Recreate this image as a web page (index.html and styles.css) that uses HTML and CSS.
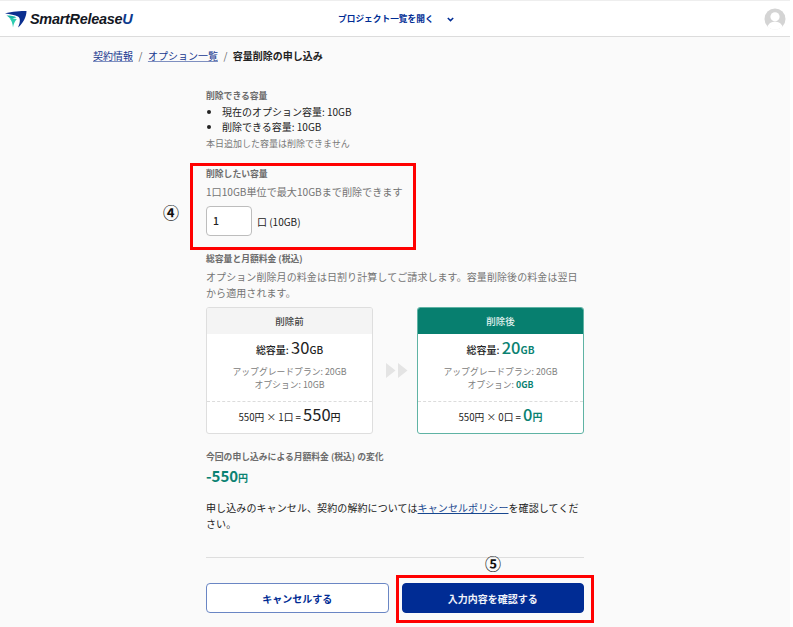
FILE: index.html
```html
<!DOCTYPE html>
<html lang="ja">
<head>
<meta charset="utf-8">
<title>容量削除の申し込み</title>
<link rel="stylesheet" href="styles.css">
</head>
<body>
<div class="page">
  <header class="header">
    <div class="logo">
      <svg class="logo-mark" width="22" height="17" viewBox="0 0 22 17">
        <path d="M0 2.500C7 .5 16 0 21.500 0C21.500 6 18 12.500 13 16.500C15.500 11 15.500 7 13 5.500C10 4 5 3.300 0 2.500Z" fill="#0b2f8f"/>
        <path d="M1.500 4.500C5.500 4.500 9.500 5 11.500 6.500C9 6.500 7.500 7.500 6.800 9C5.500 7.500 3.500 5.700 1.500 4.500Z" fill="#19b5a5"/>
        <path d="M4.500 7.500C6.500 9.500 7.600 12 8 16.500C8.600 13 9.500 10.500 11.800 8C9.500 7.500 7 7.500 4.500 7.500Z" fill="#2dcdb0"/>
      </svg>
      <span class="logo-text">SmartRelease<span class="logo-u">U</span></span>
    </div>
    <div class="project-menu">
      <span>プロジェクト一覧を開く</span>
      <svg class="chevron" width="7" height="5" viewBox="0 0 7 5"><path d="M.8 1l2.700 2.600L6.200 1" fill="none" stroke="#002c94" stroke-width="1.500"/></svg>
    </div>
    <svg class="avatar" width="22" height="22" viewBox="0 0 22 22">
      <circle cx="11" cy="11" r="10.500" fill="#d4d4d4"/>
      <circle cx="11" cy="8.800" r="4.600" fill="#fff"/>
      <path d="M3.500 18.500C5 14.800 8 13.800 11 13.800s6 1 7.500 4.700A10.500 10.500 0 0 1 3.500 18.500Z" fill="#fff"/>
    </svg>
  </header>

  <nav class="breadcrumb">
    <a href="#">契約情報</a><span class="sep">/</span><a href="#">オプション一覧</a><span class="sep">/</span><strong>容量削除の申し込み</strong>
  </nav>

  <main class="content">
    <section class="block-available">
      <h2 class="label">削除できる容量</h2>
      <ul class="list">
        <li>現在のオプション容量: 10GB</li>
        <li>削除できる容量: 10GB</li>
      </ul>
      <p class="note">本日追加した容量は削除できません</p>
    </section>

    <section class="block-input">
      <h2 class="label">削除したい容量</h2>
      <p class="hint">1口10GB単位で最大10GBまで削除できます</p>
      <div class="input-row">
        <div class="number-box">1</div>
        <span class="unit">口 (10GB)</span>
      </div>
    </section>

    <section class="block-total">
      <h2 class="label">総容量と月額料金 (税込)</h2>
      <p class="hint wrap">オプション削除月の料金は日割り計算してご請求します。容量削除後の料金は翌日から適用されます。</p>
      <div class="compare">
        <div class="card">
          <div class="card-head">削除前</div>
          <div class="card-main">
            <div class="total">総容量: <span class="num">30</span><span class="suffix">GB</span></div>
            <div class="detail">アップグレードプラン: 20GB<br>オプション: 10GB</div>
          </div>
          <div class="card-foot">550円 × 1口 = <span class="num">550</span><span class="suffix">円</span></div>
        </div>
        <svg class="arrows" width="22" height="15" viewBox="0 0 22 15">
          <path d="M0 0l9.500 7.500L0 15ZM12 0l9.500 7.500L12 15Z" fill="#e4e4e4"/>
        </svg>
        <div class="card card-after">
          <div class="card-head">削除後</div>
          <div class="card-main">
            <div class="total">総容量: <span class="num green">20</span><span class="suffix green">GB</span></div>
            <div class="detail">アップグレードプラン: 20GB<br>オプション: <b class="green">0GB</b></div>
          </div>
          <div class="card-foot">550円 × 0口 = <span class="num green">0</span><span class="suffix green">円</span></div>
        </div>
      </div>
    </section>

    <section class="block-change">
      <h2 class="label">今回の申し込みによる月額料金 (税込) の変化</h2>
      <div class="change"><b class="change-num">-550</b><b class="change-unit">円</b></div>
    </section>

    <p class="policy">申し込みのキャンセル、契約の解約については<a href="#">キャンセルポリシー</a>を確認してください。</p>

    <hr class="rule">

    <div class="actions">
      <button class="btn btn-outline" type="button">キャンセルする</button>
      <button class="btn btn-primary" type="button">入力内容を確認する</button>
    </div>
  </main>

  <div class="mark-box mark-box-input"></div>
  <div class="mark-box mark-box-submit"></div>
  <span class="marker marker-4">④</span>
  <span class="marker marker-5">⑤</span>
</div>
</body>
</html>
```
FILE: styles.css
```css
* { box-sizing: border-box; }
html, body { margin: 0; padding: 0; background: #fff; }
body {
  font-family: "Noto Sans CJK JP", "Noto Sans", sans-serif;
  color: #1f1f1f;
  overflow: hidden;
}
.page {
  position: relative;
  width: 790px;
  height: 627px;
  background: #fafafa;
  overflow: hidden;
}
.header {
  position: relative;
  display: flex;
  align-items: center;
  height: 37px;
  padding: 1px 4px 0 5px;
  background: #fff;
  border-top: 1px solid #eee;
  border-bottom: 1px solid #dcdcdc;
}
.logo { display: flex; align-items: center; width: 130px; }
.logo-mark { margin-right: 3px; flex: none; }
.logo-text {
  font-family: "Liberation Sans", sans-serif;
  font-size: 14.500px;
  font-weight: 700;
  font-style: italic;
  letter-spacing: -0.300px;
  color: #14171f;
}
.logo-u { color: #0b3a8f; }
.project-menu {
  position: absolute;
  left: 338px;
  top: 11px;
  display: flex;
  align-items: center;
  gap: 13px;
  font-size: 8.700px;
  line-height: 14px;
  font-weight: 700;
  color: #002c94;
}
.avatar { margin-left: auto; }
.breadcrumb {
  display: flex;
  align-items: center;
  height: 16px;
  margin: 11px 0 0 93px;
  font-size: 10px;
  line-height: 16px;
}
.breadcrumb a { color: #17388f; text-decoration: underline; text-decoration-color: #7e8fc0; }
.breadcrumb .sep { margin: 0 5.500px; color: #666; }
.breadcrumb strong { font-weight: 700; color: #222; }
.content { width: 378px; margin: 26px 0 0 206px; }
.label {
  margin: 0;
  font-size: 8.800px;
  line-height: 12px;
  font-weight: 700;
  color: #6c6c6c;
}
.list {
  margin: 2px 0 0;
  padding: 0 0 0 16px;
  font-size: 10px;
  line-height: 15px;
  color: #222;
}
.note { margin: 3px 0 0; font-size: 9px; line-height: 14px; color: #787878; }
.block-input { margin-top: 17px; }
.hint { margin: 4px 0 0; font-size: 10.100px; line-height: 16px; color: #747474; white-space: nowrap; }
.hint.wrap { white-space: normal; font-size: 10px; line-height: 16px; margin-top: 4px; letter-spacing: .08px; }
.input-row { display: flex; align-items: center; margin-top: 6px; height: 30px; }
.number-box {
  width: 46px;
  height: 30px;
  padding-left: 6px;
  line-height: 28px;
  font-size: 10.500px;
  font-weight: 500;
  color: #222;
  background: #fff;
  border: 1px solid #bdbdbd;
  border-radius: 4px;
}
.unit { margin-left: 5px; font-size: 10px; color: #222; }
.block-total { margin-top: 17px; }
.compare { display: flex; align-items: center; margin-top: 6px; }
.arrows { margin: 0 9px 0 13px; flex: none; }
.card {
  width: 167px;
  height: 127px;
  display: flex;
  flex-direction: column;
  background: #fff;
  border: 1px solid #dedede;
  border-radius: 3px;
  overflow: hidden;
  text-align: center;
}
.card-head {
  height: 26px;
  flex: none;
  font-size: 9.500px;
  font-weight: 500;
  line-height: 26px;
  color: #444;
  background: #f4f4f4;
}
.card-main { flex: 1; padding-top: 3px; }
.total { font-size: 10px; line-height: 20px; font-weight: 500; color: #222; }
.num { font-size: 16.500px; font-weight: 400; }
.suffix { font-size: 10px; font-weight: 500; }
.detail { margin-top: 5px; font-size: 8.800px; line-height: 13px; color: #808080; }
.card-foot {
  height: 32px;
  flex: none;
  border-top: 1px dashed #dcdcdc;
  font-size: 9.700px;
  line-height: 30px;
  color: #222;
}
.card-foot .num { line-height: 20px; }
.card-after { border-color: #5fb3a4; }
.card-after .card-head { background: #077f6f; color: #e3f3ef; }
.green { color: #0a8272; font-weight: 700; }
.num.green { font-weight: 500; }
.block-change { margin-top: 17px; }
.change { margin-top: 0; height: 24px; line-height: 24px; color: #0a8272; }
.change-num { font-size: 15px; font-weight: 700; }
.change-unit { font-size: 10px; font-weight: 700; }
.policy {
  margin: 13px 0 0;
  font-size: 10px;
  line-height: 16px;
  color: #222;
  letter-spacing: .1px;
}
.policy a { color: #17478f; text-decoration: underline; }
.rule { height: 1px; margin: 25px 0 0; border: 0; background: #dedede; }
.actions { display: flex; gap: 13px; margin-top: 25px; }
.btn {
  flex: 1;
  height: 30px;
  padding: 0;
  font-family: inherit;
  font-size: 10px;
  font-weight: 700;
  border-radius: 4px;
}
.btn-outline { color: #002c94; background: #fff; border: 1px solid #6a86c4; }
.btn-primary { color: #f0f3fa; background: #002c94; border: 1px solid #002c94; }
.mark-box { position: absolute; border: 3px solid #f00; }
.mark-box-input { left: 190px; top: 163px; width: 226px; height: 87px; }
.mark-box-submit { left: 396px; top: 575px; width: 198px; height: 48px; }
.marker {
  position: absolute;
  font-size: 16px;
  line-height: 16px;
  color: #111;
  font-weight: 700;
}
.marker-4 { left: 163px; top: 204px; }
.marker-5 { left: 485px; top: 555px; }
```
